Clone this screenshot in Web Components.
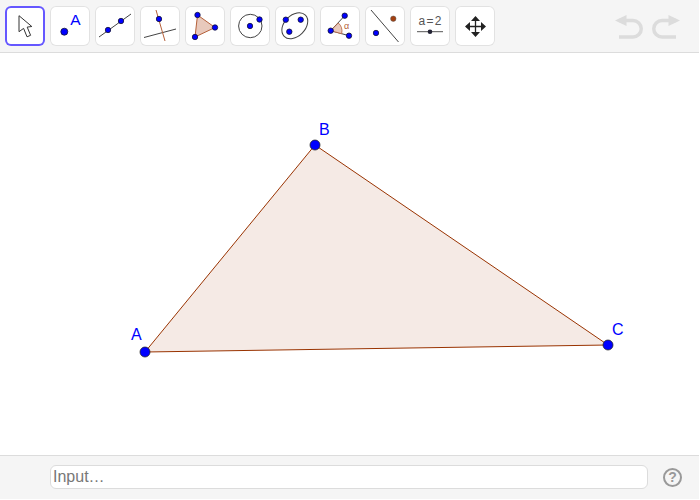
<!DOCTYPE html>
<html><head><meta charset="utf-8"><style>
html,body{margin:0;padding:0;background:#fff;overflow:hidden}
body{font-family:"Liberation Sans",Arial,sans-serif}
</style></head><body>
<gg-app>
<gg-toolbar>
<gg-tool active><svg viewBox="0 0 40 40"><path d="M14 9.700V25.700l4.600-3.300 3.400 8.400 3.600-1.500-3.400-8.200 4.600-.6z" fill="#fff" stroke="#333" stroke-width="1"/></svg></gg-tool>
<gg-tool><svg viewBox="0 0 40 40"><circle class="p" cx="14.300" cy="25.700" r="3.500"/><text x="20.300" y="19" font-size="15.500" fill="#00f">A</text></svg></gg-tool>
<gg-tool><svg viewBox="0 0 40 40"><path d="M4 31 36 8" stroke="#444" fill="none"/><circle class="p" cx="13" cy="24" r="2.700"/><circle class="p" cx="26" cy="15" r="2.700"/></svg></gg-tool>
<gg-tool><svg viewBox="0 0 40 40"><path d="M4 31.500 36 23" stroke="#444" fill="none"/><path d="M16 4 25 35" stroke="#b5603a" fill="none"/><circle class="p" cx="19" cy="13" r="2.700"/></svg></gg-tool>
<gg-tool><svg viewBox="0 0 40 40"><path d="M12.500 9 30 21.500 10 31z" fill="#e8c9bc" stroke="#b5603a"/><circle class="p" cx="12.500" cy="9" r="2.700"/><circle class="p" cx="30" cy="21.500" r="2.700"/><circle class="p" cx="10" cy="31" r="2.700"/></svg></gg-tool>
<gg-tool><svg viewBox="0 0 40 40"><circle cx="20.300" cy="20" r="11.700" fill="none" stroke="#444"/><circle class="p" cx="20" cy="20" r="2.700"/><circle class="p" cx="29.500" cy="13.500" r="2.700"/></svg></gg-tool>
<gg-tool><svg viewBox="0 0 40 40"><ellipse cx="19.800" cy="19.700" rx="15" ry="10.500" transform="rotate(-45 19.800 19.700)" fill="none" stroke="#444"/><circle class="p" cx="10.800" cy="13.700" r="2.700"/><circle class="p" cx="25.700" cy="13.700" r="2.700"/><circle class="p" cx="14.300" cy="25.700" r="2.700"/></svg></gg-tool>
<gg-tool><svg viewBox="0 0 40 40"><path d="M10.700 24.700 24.700 9.700M10.700 24.700 29 29.700" stroke="#444" fill="none"/><path d="M10.700 24.700 18.300 17Q23 21 21.700 27.700z" fill="#e8c9bc" stroke="#b5603a" stroke-width=".8"/><circle class="p" cx="10.700" cy="24.700" r="2.700"/><circle class="p" cx="24.700" cy="9.700" r="2.700"/><circle class="p" cx="29" cy="29.700" r="2.700"/><text x="24" y="22.700" font-size="9" fill="#b5603a">α</text></svg></gg-tool>
<gg-tool><svg viewBox="0 0 40 40"><path d="M6 4 33.500 36" stroke="#444" fill="none"/><circle class="p" cx="11" cy="27" r="2.700"/><circle cx="28.300" cy="12.700" r="2.700" fill="#a33f10" stroke="#555" stroke-width=".5"/></svg></gg-tool>
<gg-tool><svg viewBox="0 0 40 40"><text x="20" y="19" font-size="12" fill="#555" text-anchor="middle" word-spacing="-2">a = 2</text><path d="M7 25.700H33" stroke="#555" stroke-width="1" fill="none"/><circle cx="20" cy="25.700" r="2.300" fill="#223"/></svg></gg-tool>
<gg-tool><svg viewBox="0 0 40 40"><path d="M20.500 11V29M11 20.500H29" stroke="#222" stroke-width="1.300" fill="none"/><path d="M20.500 10l-4.500 5h9zM20.500 31l-4.500-5h9zM10 20.500l5-4.500v9zM31 20.500l-5-4.500v9z" fill="#222"/></svg></gg-tool>
<gg-history></gg-history>
</gg-toolbar>
<gg-canvas></gg-canvas>
<gg-inputbar></gg-inputbar>
</gg-app>
<script>
function shadow(el,html){el.attachShadow({mode:'open'}).innerHTML=html}
customElements.define('gg-app',class extends HTMLElement{constructor(){super();shadow(this,`<style>:host{display:grid;grid-template-rows:53px 402px 44px;width:699px;height:499px}</style><slot></slot>`)}});
customElements.define('gg-toolbar',class extends HTMLElement{constructor(){super();shadow(this,`<style>:host{display:flex;gap:5px;align-items:flex-start;box-sizing:border-box;height:53px;padding:6px 0 0 5px;background:#f5f5f5;border-bottom:1px solid #dcdcdc}</style><slot></slot>`)}});
customElements.define('gg-tool',class extends HTMLElement{constructor(){super();shadow(this,`<style>
:host{display:block;width:40px;height:40px;box-sizing:border-box;background:#fff;border-radius:6px;box-shadow:inset 0 0 0 1px #e2e2e2}
:host([active]){box-shadow:inset 0 0 0 2px #6557ff}
::slotted(svg){display:block;width:40px;height:40px}
</style><slot></slot>`)}
connectedCallback(){this.querySelectorAll('.p').forEach(c=>{c.setAttribute('fill','#00f');c.setAttribute('stroke','#113');c.setAttribute('stroke-width','.8')});this.querySelectorAll('text').forEach(t=>t.setAttribute('font-family','Liberation Sans, Arial, sans-serif'))}});
customElements.define('gg-history',class extends HTMLElement{constructor(){super();shadow(this,`<style>:host{display:flex;gap:9px;margin:9px 0 0 auto;padding-right:19px}svg{display:block;width:28px;height:26px}</style>
<svg viewBox="0 0 28 26"><path d="M4 5.500H18A8.250 8.250 0 0 1 18 22H4" fill="none" stroke="#dcdcdc" stroke-width="3.500"/><path d="M0 5.500 11.500 0V11z" fill="#dcdcdc"/></svg>
<svg viewBox="0 0 28 26"><path d="M24 5.500H10A8.250 8.250 0 0 0 10 22H24" fill="none" stroke="#dcdcdc" stroke-width="3.500"/><path d="M28 5.500 16.500 0V11z" fill="#dcdcdc"/></svg>`)}});
customElements.define('gg-canvas',class extends HTMLElement{constructor(){super();
const P=[[145,352,'A',131,340],[315,145,'B',319,135],[608,345,'C',612,335]];
shadow(this,`<style>:host{display:block;background:#fff;height:402px;overflow:hidden}svg{display:block}text{font:16px "Liberation Sans",Arial,sans-serif;fill:#00f}</style>
<svg width="699" height="402" viewBox="0 53 699 402">
<polygon points="145,352 315,145 608,345" fill="#993300" fill-opacity=".1" stroke="#993300" stroke-width="1"/>
${P.map(p=>`<circle cx="${p[0]}" cy="${p[1]}" r="5" fill="#00f" stroke="#222" stroke-width="1" stroke-opacity=".75"/><text x="${p[3]}" y="${p[4]}">${p[2]}</text>`).join('')}
</svg>`)}});
customElements.define('gg-inputbar',class extends HTMLElement{constructor(){super();shadow(this,`<style>
:host{display:flex;align-items:flex-start;box-sizing:border-box;height:44px;background:#f5f5f5;border-top:1px solid #dcdcdc;padding:9px 0 0 50px;font:16px "Liberation Sans",Arial,sans-serif}
.in{box-sizing:border-box;width:598px;height:24px;background:#fff;border:1px solid #dcdcdc;border-radius:6px;padding:0 0 0 2px;color:#777;line-height:22px;white-space:nowrap}
.help{box-sizing:border-box;width:19px;height:19px;margin:3px 0 0 15px;border:2px solid #999;border-radius:50%;color:#999;font:bold 14px/15px "Liberation Sans",Arial,sans-serif;text-align:center}
</style><div class="in">Input…</div><div class="help">?</div>`)}});
</script>
</body></html>
